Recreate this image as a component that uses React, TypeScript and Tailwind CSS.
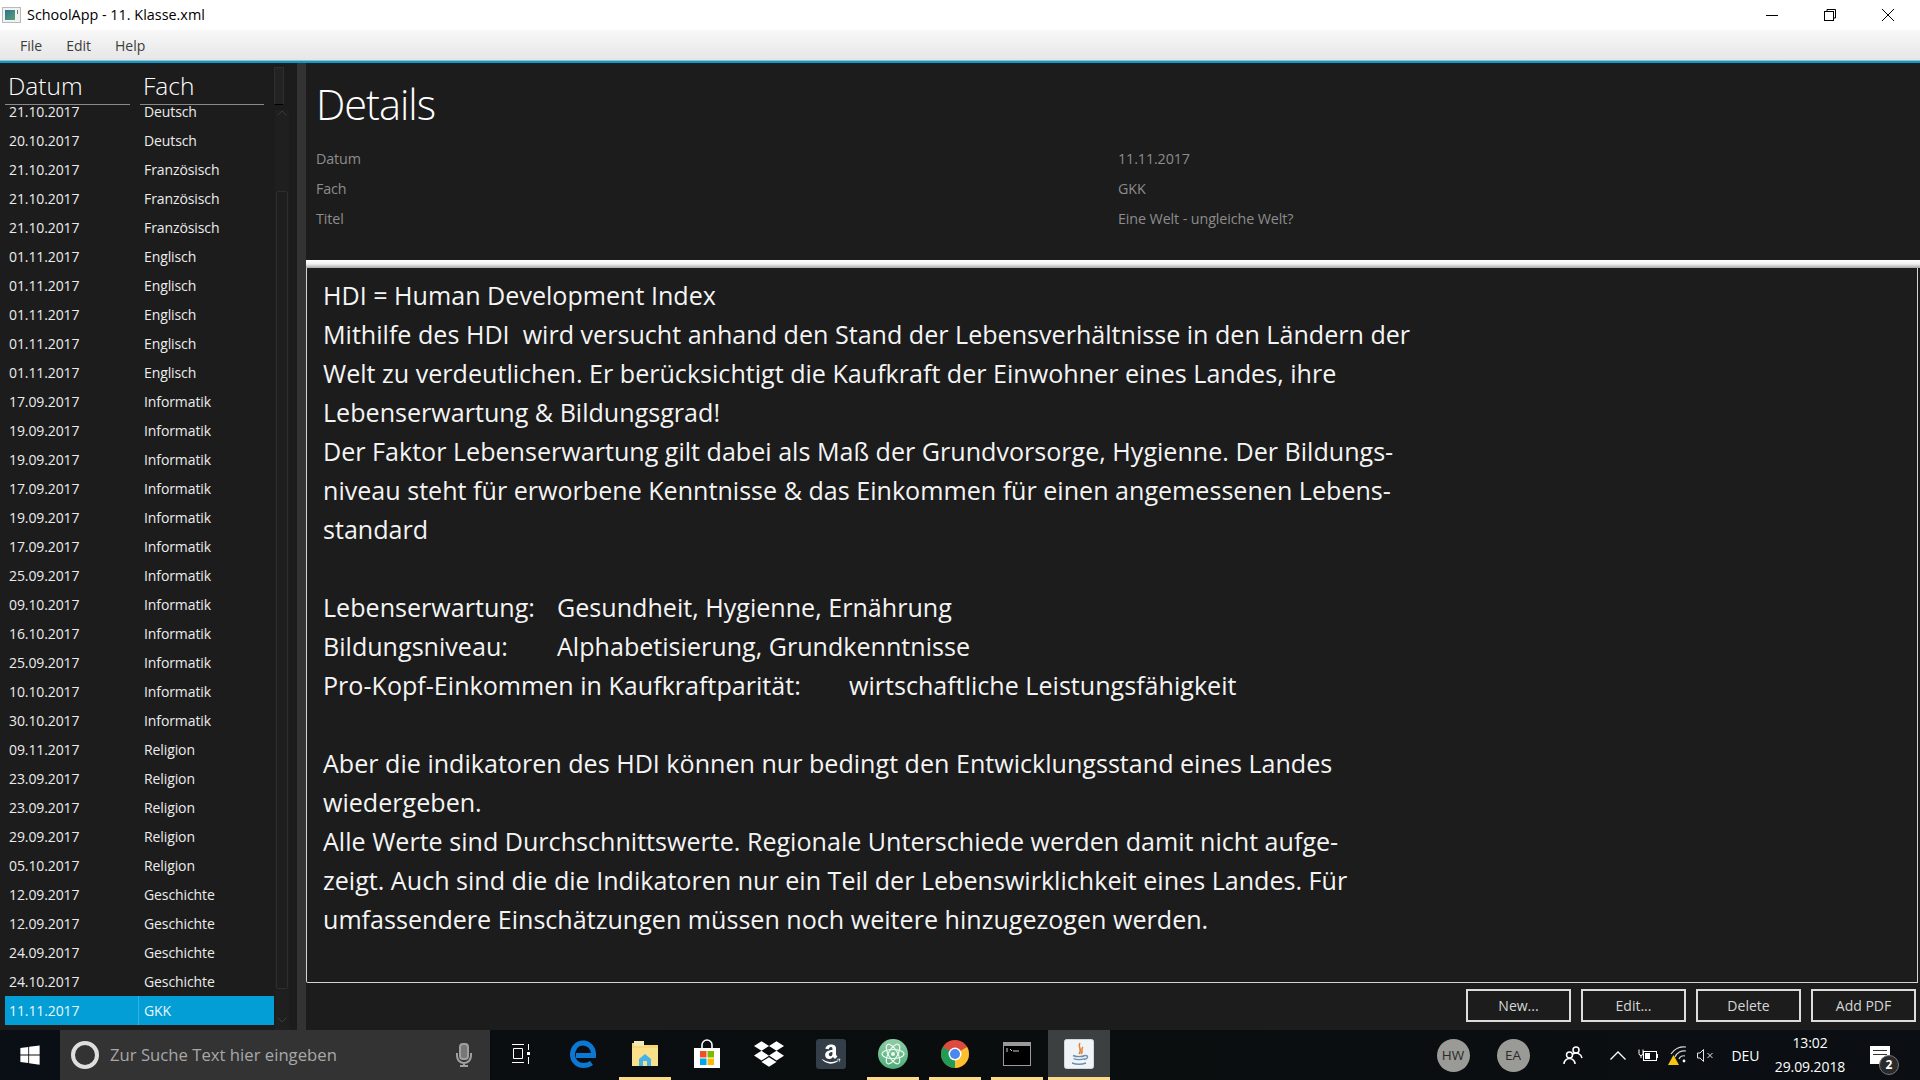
import React from "react";
import { FaDropbox, FaAmazon, FaWindows } from "react-icons/fa";

const rows: [string, string][] = [
  ["21.10.2017", "Deutsch"], ["20.10.2017", "Deutsch"],
  ["21.10.2017", "Französisch"], ["21.10.2017", "Französisch"], ["21.10.2017", "Französisch"],
  ["01.11.2017", "Englisch"], ["01.11.2017", "Englisch"], ["01.11.2017", "Englisch"], ["01.11.2017", "Englisch"], ["01.11.2017", "Englisch"],
  ["17.09.2017", "Informatik"], ["19.09.2017", "Informatik"], ["19.09.2017", "Informatik"], ["17.09.2017", "Informatik"], ["19.09.2017", "Informatik"], ["17.09.2017", "Informatik"],
  ["25.09.2017", "Informatik"], ["09.10.2017", "Informatik"], ["16.10.2017", "Informatik"], ["25.09.2017", "Informatik"], ["10.10.2017", "Informatik"], ["30.10.2017", "Informatik"],
  ["09.11.2017", "Religion"], ["23.09.2017", "Religion"], ["23.09.2017", "Religion"], ["29.09.2017", "Religion"], ["05.10.2017", "Religion"],
  ["12.09.2017", "Geschichte"], ["12.09.2017", "Geschichte"], ["24.09.2017", "Geschichte"], ["24.10.2017", "Geschichte"],
  ["11.11.2017", "GKK"],
];

const FONT = "font-['Open_Sans','Noto_Sans',sans-serif]";

function Chevron({ up }: { up?: boolean }) {
  return (
    <svg width="10" height="6" viewBox="0 0 10 6" fill="none" stroke="#3a3a3a" strokeWidth="1">
      <path d={up ? "M0.5 5.5L5 1L9.5 5.5" : "M0.5 0.5L5 5L9.5 0.5"} />
    </svg>
  );
}

function Slot({ children, bar, active }: { children: React.ReactNode; bar?: boolean; active?: boolean }) {
  return (
    <div className={`w-[62px] h-full flex flex-col ${active ? "bg-[#3d4040]" : ""}`}>
      <div className="flex-1 flex items-center justify-center">{children}</div>
      <div className={`h-[3px] ${active ? "" : "mx-[5px]"} ${bar ? "bg-[#fdd98a]" : ""}`} />
    </div>
  );
}

function Btn({ label }: { label: string }) {
  return (
    <div className="w-[105px] h-[33px] border-2 border-[#dcdcdc] flex items-center justify-center text-[14px] text-[#d6d6d6]">
      {label}
    </div>
  );
}

function Field({ label, value }: { label: string; value: string }) {
  return (
    <div className="flex h-[30px] items-center text-[14.3px] tracking-[-0.1px] text-[#8c8c8c]">
      <div className="w-[802px]">{label}</div>
      <div>{value}</div>
    </div>
  );
}

export default function App() {
  return (
    <div className={`w-[1920px] h-[1080px] flex flex-col overflow-hidden bg-[#1c1c1c] ${FONT}`}>
      {/* title bar */}
      <div className="h-[30px] bg-white flex items-center pb-[1px] text-black shrink-0">
        <svg className="ml-[2px]" width="19" height="16" viewBox="0 0 19 16">
          <rect x="0.5" y="0.5" width="18" height="15" fill="#f1f1f1" stroke="#b9b9b9" />
          <defs>
            <linearGradient id="tg" x1="0" y1="0" x2="1" y2="1">
              <stop offset="0" stopColor="#2f6f92" />
              <stop offset="1" stopColor="#5aa173" />
            </linearGradient>
          </defs>
          <rect x="3" y="3" width="10" height="10" fill="url(#tg)" />
          <rect x="15" y="3" width="1" height="4" fill="#777" />
        </svg>
        <div className="ml-[6px] text-[14.4px]">SchoolApp - 11. Klasse.xml</div>
        <div className="ml-auto flex items-center">
          <div className="w-[58px] flex justify-center">
            <svg width="12" height="12" viewBox="0 0 12 12"><path d="M0 6.5H12" stroke="#000" strokeWidth="1" /></svg>
          </div>
          <div className="w-[58px] flex justify-center">
            <svg width="12" height="12" viewBox="0 0 12 12" fill="none" stroke="#000">
              <path d="M3 2.5V0.5H11.5V9H9.5" />
              <rect x="0.5" y="2.5" width="9" height="9" />
            </svg>
          </div>
          <div className="w-[58px] flex justify-center mr-[3px]">
            <svg width="12" height="12" viewBox="0 0 12 12" stroke="#000"><path d="M0 0L12 12M12 0L0 12" /></svg>
          </div>
        </div>
      </div>
      {/* menu */}
      <div className="h-[33px] shrink-0 flex flex-col">
        <div className="h-[30px] bg-gradient-to-b from-[#f8f8f8] to-[#e6e6e6] flex items-center pl-[20px] gap-[24px] text-[14px] text-[#3c3c3c]">
          <span>File</span>
          <span>Edit</span>
          <span>Help</span>
        </div>
        <div className="h-[1px] bg-[#b5b5b5]" />
        <div className="h-[2px] bg-[#039ed3]" />
      </div>
      {/* body */}
      <div className="flex-1 flex min-h-0">
        {/* left */}
        <div className="w-[297px] flex shrink-0">
          <div className="w-[274px] pl-[5px] flex flex-col overflow-hidden">
            <div className="relative z-10 h-[42px] shrink-0 bg-[#1c1c1c] flex gap-[10px] items-end text-[24.5px] font-light text-white leading-none">
              <div className="w-[125px] h-full border-b border-[#8a8a8a] pl-[3px] pt-[11px]">Datum</div>
              <div className="w-[124px] h-full border-b border-[#8a8a8a] pl-[3px] pt-[11px]">Fach</div>
            </div>
            <div className="-mt-[8px] text-[14px] text-[#ececec]">
              {rows.map(([d, f], i) => {
                const sel = i === rows.length - 1;
                return (
                  <div key={i} className={`h-[29px] flex items-center tracking-[-0.1px] ${sel ? "bg-[#039ed6] text-[#e8f6fb]" : ""}`}>
                    <div className={`w-[134px] h-full flex items-center pl-[4px] ${sel ? "border-r border-[#2fb2e0]" : ""}`}>{d}</div>
                    <div className="pl-[5px]">{f}</div>
                  </div>
                );
              })}
            </div>
          </div>
          <div className="w-[23px] pt-[4px] flex flex-col items-start">
            <div className="w-[10px] h-[38px] border border-[#2e2e2e] border-b-black bg-[#232323] shrink-0" />
            <div className="w-[10px] h-[5px] shrink-0" />
            <div className="w-[14px] ml-[1px] pb-[5px] flex-1 flex flex-col items-center bg-[#1f1f1f] min-h-0">
              <Chevron up />
              <div className="h-[75px] shrink-0" />
              <div className="w-[12px] flex-1 border border-[#2e2e2e] rounded-[2px] bg-[#1e1e1e]" />
              <div className="h-[36px] shrink-0 flex items-end justify-center pb-[2px]"><Chevron /></div>
            </div>
          </div>
        </div>
        {/* divider */}
        <div className="w-[9px] bg-[#333333] shrink-0" />
        {/* right */}
        <div className="flex-1 flex flex-col min-w-0">
          <div className="h-[197px] shrink-0 pl-[10px] flex flex-col">
            <div className="h-[81px] pt-[12px] text-[41.5px] leading-[58px] font-light text-white tracking-[-1px]">Details</div>
            <Field label="Datum" value="11.11.2017" />
            <Field label="Fach" value="GKK" />
            <Field label="Titel" value="Eine Welt - ungleiche Welt?" />
          </div>
          <div className="h-[8px] shrink-0 bg-gradient-to-b from-[#ffffff] via-[#f0f0f0] to-[#a8a8a8]" />
          <div className="h-[715px] shrink-0 mr-[2px] border-x border-b border-[#d4d4d4] rounded-bl-[2px] pl-[16px] pt-[8px] text-[25.1px] leading-[39px] text-[#f4f4f4] whitespace-pre">
            <div>HDI = Human Development Index</div>
            <div>Mithilfe des HDI  wird versucht anhand den Stand der Lebensverhältnisse in den Ländern der</div>
            <div>Welt zu verdeutlichen. Er berücksichtigt die Kaufkraft der Einwohner eines Landes, ihre</div>
            <div>Lebenserwartung &amp; Bildungsgrad!</div>
            <div>Der Faktor Lebenserwartung gilt dabei als Maß der Grundvorsorge, Hygienne. Der Bildungs-</div>
            <div>niveau steht für erworbene Kenntnisse &amp; das Einkommen für einen angemessenen Lebens-</div>
            <div>standard</div>
            <div className="h-[39px]" />
            <div><span className="inline-block w-[234px]">Lebenserwartung:</span>Gesundheit, Hygienne, Ernährung</div>
            <div><span className="inline-block w-[234px]">Bildungsniveau:</span>Alphabetisierung, Grundkenntnisse</div>
            <div><span className="inline-block w-[526px]">Pro-Kopf-Einkommen in Kaufkraftparität:</span>wirtschaftliche Leistungsfähigkeit</div>
            <div className="h-[39px]" />
            <div>Aber die indikatoren des HDI können nur bedingt den Entwicklungsstand eines Landes</div>
            <div>wiedergeben.</div>
            <div>Alle Werte sind Durchschnittswerte. Regionale Unterschiede werden damit nicht aufge-</div>
            <div>zeigt. Auch sind die die Indikatoren nur ein Teil der Lebenswirklichkeit eines Landes. Für</div>
            <div>umfassendere Einschätzungen müssen noch weitere hinzugezogen werden.</div>
          </div>
          <div className="flex-1 flex items-center justify-end gap-[10px] pr-[4px] pb-[2px]">
            <Btn label="New..." />
            <Btn label="Edit..." />
            <Btn label="Delete" />
            <Btn label="Add PDF" />
          </div>
        </div>
      </div>
      {/* taskbar */}
      <div className="h-[50px] shrink-0 flex items-center bg-gradient-to-r from-[#0a0f16] via-[#0a0d0d] to-[#0b0f14] text-white">
        <div className="w-[60px] flex justify-center"><FaWindows size={22} color="#fff" /></div>
        <div className="w-[430px] h-full bg-[#333333] flex items-center">
          <div className="ml-[11px] w-[28px] h-[28px] rounded-full border-[4px] border-[#dedede]" />
          <div className="ml-[11px] text-[16.7px] text-[#a8a8a8]">Zur Suche Text hier eingeben</div>
          <svg className="ml-auto mr-[18px]" width="16" height="24" viewBox="0 0 16 24" fill="none" stroke="#a0a0a0" strokeWidth="2">
            <rect x="4" y="1" width="8" height="15" rx="3" fill="#777" />
            <path d="M1 10v3a7 7 0 0 0 14 0v-3M8 20v3M4 23h8" />
          </svg>
        </div>
        <Slot>
          <svg width="20" height="20" viewBox="0 0 20 20" fill="none" stroke="#fff" strokeWidth="1">
            <path d="M1 0.5h12M2.5 4.5h9v10h-9zM1 18.5h12M17.5 0v6M17.5 13v7" />
            <rect x="16" y="8" width="3" height="3" fill="#fff" stroke="none" />
          </svg>
        </Slot>
        <Slot>
          <svg width="26" height="28" viewBox="0 0 26 28" fill="none">
            <path d="M6 15.5H23.5C24 8 19 3 13 3C7 3 2.5 8 2.5 14.5C2.5 21.5 8 25.5 13.5 25.5C17 25.5 19.5 24.5 21.5 23" stroke="#0b78d4" strokeWidth="5" />
            <path d="M1 12C3 4 10 0 16 1C10 2 7 6 6 11z" fill="#0b78d4" />
          </svg>
        </Slot>
        <Slot bar>
          <svg width="28" height="28" viewBox="0 0 28 28">
            <path d="M1 3h10l2 2h14v21H1z" fill="#f7d774" />
            <rect x="3" y="1" width="10" height="5" fill="#f2e9b8" />
            <path d="M1 8h26v18H1z" fill="#fbe08c" />
            <path d="M8 19l6-5 6 5v7H8z" fill="#46b3e6" />
            <rect x="12" y="21" width="4" height="5" fill="#fbe08c" />
          </svg>
        </Slot>
        <Slot>
          <svg width="28" height="30" viewBox="0 0 28 30">
            <path d="M9 9V6a5 5 0 0 1 10 0v3" fill="none" stroke="#fff" strokeWidth="1.6" />
            <rect x="1" y="9" width="26" height="20" fill="#fff" />
            <rect x="7" y="12" width="6.5" height="6.5" fill="#f25022" />
            <rect x="14.5" y="12" width="6.5" height="6.5" fill="#7fba00" />
            <rect x="7" y="19.5" width="6.5" height="6.5" fill="#00a4ef" />
            <rect x="14.5" y="19.5" width="6.5" height="6.5" fill="#ffb900" />
          </svg>
        </Slot>
        <Slot><FaDropbox size={30} color="#fff" /></Slot>
        <Slot>
          <div className="w-[30px] h-[30px] rounded-[3px] bg-[#333e48] flex items-center justify-center"><FaAmazon size={22} color="#fff" /></div>
        </Slot>
        <Slot bar>
          <svg width="30" height="30" viewBox="0 0 30 30">
            <defs>
              <linearGradient id="atomg" x1="0" y1="0" x2="0" y2="1">
                <stop offset="0" stopColor="#8fcea5" />
                <stop offset="1" stopColor="#4dad78" />
              </linearGradient>
            </defs>
            <ellipse cx="15" cy="15" rx="15" ry="15" fill="url(#atomg)" />
            <g fill="none" stroke="#eef8f0" strokeWidth="1.2">
              <ellipse cx="15" cy="15" rx="11" ry="4.5" />
              <ellipse cx="15" cy="15" rx="11" ry="4.5" transform="rotate(60 15 15)" />
              <ellipse cx="15" cy="15" rx="11" ry="4.5" transform="rotate(120 15 15)" />
            </g>
            <circle cx="15" cy="15" r="2" fill="#eef8f0" />
          </svg>
        </Slot>
        <Slot bar>
          <svg width="28" height="28" viewBox="0 0 28 28">
            <circle cx="14" cy="14" r="14" fill="#dd4b3e" />
            <path d="M14 14L26.1 7A14 14 0 0 1 14 28z" fill="#fbc02d" />
            <path d="M14 14L14 28A14 14 0 0 1 1.9 7z" fill="#1f9d57" />
            <circle cx="14" cy="14" r="6.5" fill="#fff" />
            <circle cx="14" cy="14" r="5" fill="#4a88ee" />
          </svg>
        </Slot>
        <Slot bar>
          <svg width="28" height="24" viewBox="0 0 28 24">
            <rect x="0.5" y="0.5" width="27" height="23" fill="#000" stroke="#9a9a9a" />
            <rect x="1" y="1" width="26" height="3" fill="#9a9a9a" />
            <path d="M3 7h2M3 9h2M7 7l2 2M10 9h6" stroke="#ccc" strokeWidth="1" />
          </svg>
        </Slot>
        <Slot bar active>
          <svg width="30" height="30" viewBox="0 0 30 30" fill="none">
            <rect x="0.5" y="0.5" width="29" height="29" rx="2" fill="#f1f4f7" stroke="#cfd6dc" />
            <path d="M16 4C13 8 19 10 15 15M19 8C16 10 20 12 17 15" stroke="#e2802f" strokeWidth="1.5" />
            <path d="M9 16.5C12 18 18 18 21 16.5M9.5 19.5C12 21 18 21 20.5 19.5" stroke="#6d8db0" strokeWidth="1.4" />
            <path d="M21 16.5C25 16 24 20 20 20.5M8 24C12 25.5 18 25.5 22 24" stroke="#6d8db0" strokeWidth="1.4" />
          </svg>
        </Slot>
        <div className="ml-auto flex items-center h-full pr-[9px]">
          <div className="w-[60px] flex justify-center">
            <div className="w-[33px] h-[33px] rounded-full bg-[#9a9a96] flex items-center justify-center text-[13.5px] text-[#2a2a2a]">HW</div>
          </div>
          <div className="w-[60px] flex justify-center">
            <div className="w-[33px] h-[33px] rounded-full bg-[#9a9a96] flex items-center justify-center text-[13.5px] text-[#2a2a2a]">EA</div>
          </div>
          <div className="w-[60px] flex justify-center">
            <svg width="20" height="20" viewBox="0 0 20 20" fill="none" stroke="#fff" strokeWidth="1.5">
              <circle cx="13" cy="5" r="3" />
              <circle cx="6.5" cy="10" r="3" />
              <path d="M1 19a5.5 5.5 0 0 1 11 0M10 9a6 6 0 0 1 9 4" />
            </svg>
          </div>
          <div className="w-[30px] flex justify-center">
            <svg width="16" height="9" viewBox="0 0 16 9" fill="none" stroke="#fff" strokeWidth="1.3"><path d="M0.5 8.5L8 1L15.5 8.5" /></svg>
          </div>
          <div className="w-[30px] flex justify-center">
            <svg width="20" height="13" viewBox="0 0 20 13" fill="none" stroke="#fff">
              <rect x="5.5" y="2.5" width="13" height="9" />
              <rect x="7" y="4" width="5" height="6" fill="#fff" stroke="none" />
              <rect x="19" y="5" width="1" height="4" fill="#fff" stroke="none" />
              <path d="M1 0.5v4a2 2 0 0 0 4 0v-4M3 6v3" />
            </svg>
          </div>
          <div className="w-[30px] flex justify-center">
            <svg width="20" height="20" viewBox="0 0 20 20" fill="none" stroke="#d8d8d8" strokeWidth="1.2">
              <path d="M3 9a15 15 0 0 1 15-7M7 12a10 10 0 0 1 11-6M11 14a5 5 0 0 1 6-3" />
              <circle cx="16" cy="16" r="1.4" fill="#fff" stroke="none" />
              <path d="M5.5 10L11 20H0z" fill="#f9c513" stroke="none" />
            </svg>
          </div>
          <div className="w-[26px] flex justify-center">
            <svg width="18" height="13" viewBox="0 0 18 13" fill="none" stroke="#e4e4e4">
              <path d="M0.5 4v5h2.5l3.5 3.5V0.5L3 4z" />
              <path d="M10.5 4l5 5M15.5 4l-5 5" />
            </svg>
          </div>
          <div className="w-[52px] text-center text-[14px] pl-[1px]">DEU</div>
          <div className="w-[78px] text-center text-[14px] leading-[24px] tracking-[-0.1px]">
            <div>13:02</div>
            <div>29.09.2018</div>
          </div>
          <div className="w-[62px] flex justify-center">
            <div className="relative w-[20px] h-[18px] bg-white">
              <div className="mx-[3px] mt-[4px] h-[1px] bg-[#333]" />
              <div className="mx-[3px] mt-[3px] h-[1px] bg-[#333]" />
              <div className="absolute left-[9px] top-[9px] w-[20px] h-[20px] rounded-full bg-[#2a2a2a] border border-[#777] flex items-center justify-center text-[12px] font-bold">2</div>
            </div>
          </div>
        </div>
      </div>
    </div>
  );
}
